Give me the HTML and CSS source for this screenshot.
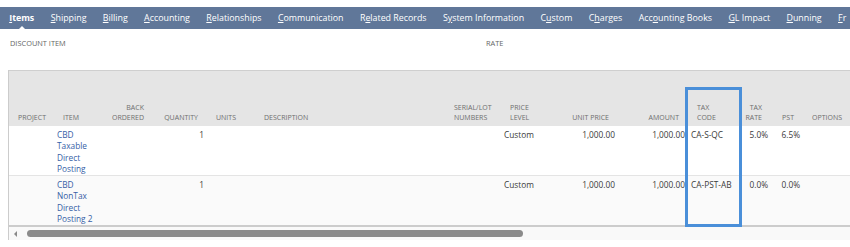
FILE: index.html
```html
<!DOCTYPE html>
<html lang="en">
<head>
<meta charset="utf-8">
<title>Items</title>
<link rel="stylesheet" href="styles.css">
</head>
<body>
<div class="page">
  <nav class="tabs">
    <span class="tab active"><u>I</u>tems</span>
    <span class="tab"><u>S</u>hipping</span>
    <span class="tab"><u>B</u>illing</span>
    <span class="tab"><u>A</u>ccounting</span>
    <span class="tab"><u>R</u>elationships</span>
    <span class="tab"><u>C</u>ommunication</span>
    <span class="tab">R<u>e</u>lated Records</span>
    <span class="tab">S<u>y</u>stem Information</span>
    <span class="tab">C<u>u</u>stom</span>
    <span class="tab">C<u>h</u>arges</span>
    <span class="tab">Acc<u>o</u>unting Books</span>
    <span class="tab"><u>G</u>L Impact</span>
    <span class="tab"><u>D</u>unning</span>
    <span class="tab"><u>F</u>r</span>
  </nav>

  <div class="fields">
    <span class="field-label discount">DISCOUNT ITEM</span>
    <span class="field-label">RATE</span>
  </div>

  <div class="grid-wrap">
    <table class="grid">
      <colgroup>
        <col class="c-project"><col class="c-item"><col class="c-back"><col class="c-qty">
        <col class="c-units"><col class="c-desc"><col class="c-serial"><col class="c-level">
        <col class="c-uprice"><col class="c-amount"><col class="c-taxcode"><col class="c-taxrate">
        <col class="c-pst"><col class="c-options">
      </colgroup>
      <thead>
        <tr>
          <th>PROJECT</th>
          <th>ITEM</th>
          <th class="num">BACK<br>ORDERED</th>
          <th class="num">QUANTITY</th>
          <th>UNITS</th>
          <th>DESCRIPTION</th>
          <th>SERIAL/LOT<br>NUMBERS</th>
          <th>PRICE<br>LEVEL</th>
          <th class="num">UNIT PRICE</th>
          <th class="num">AMOUNT</th>
          <th>TAX<br>CODE</th>
          <th class="num">TAX<br>RATE</th>
          <th class="num">PST</th>
          <th>OPTIONS</th>
        </tr>
      </thead>
      <tbody>
        <tr class="row-odd">
          <td></td>
          <td><a class="link" href="#">CBD Taxable Direct Posting</a></td>
          <td class="num"></td>
          <td class="num">1</td>
          <td></td>
          <td></td>
          <td></td>
          <td>Custom</td>
          <td class="num">1,000.00</td>
          <td class="num">1,000.00</td>
          <td>CA-S-QC</td>
          <td class="num">5.0%</td>
          <td class="num">6.5%</td>
          <td></td>
        </tr>
        <tr class="row-even">
          <td></td>
          <td><a class="link" href="#">CBD NonTax Direct Posting 2</a></td>
          <td class="num"></td>
          <td class="num">1</td>
          <td></td>
          <td></td>
          <td></td>
          <td>Custom</td>
          <td class="num">1,000.00</td>
          <td class="num">1,000.00</td>
          <td>CA-PST-AB</td>
          <td class="num">0.0%</td>
          <td class="num">0.0%</td>
          <td></td>
        </tr>
      </tbody>
    </table>
    <div class="scrollbar">
      <span class="scroll-arrow"></span>
      <span class="scroll-thumb"></span>
    </div>
    <div class="highlight"></div>
  </div>
</div>
</body>
</html>
```
FILE: styles.css
```css
html, body {
  margin: 0;
  padding: 0;
  background: #ffffff;
}

.page {
  width: 850px;
  height: 247px;
  overflow: hidden;
  font-family: "Open Sans", "DejaVu Sans", sans-serif;
  color: #333333;
}

.tabs {
  margin-top: 7px;
  height: 22px;
  background: #607799;
  display: flex;
  align-items: center;
  padding-left: 1px;
  white-space: nowrap;
  overflow: hidden;
}

.tab {
  position: relative;
  flex: none;
  padding: 0 8.2px;
  font-size: 8.85px;
  line-height: 22px;
  color: #ffffff;
}

.tab u {
  text-decoration: underline;
  text-underline-offset: 1px;
}

.tab.active {
  font-weight: 700;
}

.tab.active::after {
  content: "";
  position: absolute;
  left: 50%;
  bottom: 0;
  margin-left: -3px;
  border-left: 3px solid transparent;
  border-right: 3px solid transparent;
  border-bottom: 3px solid #ffffff;
}

.fields {
  display: flex;
  padding: 9px 0 0 10px;
  height: 10px;
  margin-bottom: 22px;
}

.field-label {
  font-size: 7.4px;
  line-height: 10px;
  color: #666666;
}

.discount {
  width: 476px;
}

.grid-wrap {
  position: relative;
  margin-left: 8px;
  width: 842px;
  overflow: hidden;
  border-left: 1px solid #cccccc;
}

.grid {
  table-layout: fixed;
  border-collapse: collapse;
  width: 851px;
}

.c-project { width: 45px; }
.c-item { width: 48px; }
.c-back { width: 51px; }
.c-qty { width: 54px; }
.c-units { width: 48px; }
.c-desc { width: 190px; }
.c-serial { width: 56px; }
.c-level { width: 44px; }
.c-uprice { width: 73px; }
.c-amount { width: 70px; }
.c-taxcode { width: 53px; }
.c-taxrate { width: 30px; }
.c-pst { width: 32px; }
.c-options { width: 57px; }

thead tr {
  background: #e5e5e5;
  border-top: 1px solid #cfcfcf;
}

th {
  height: 52px;
  padding: 0 2px 3px 9px;
  vertical-align: bottom;
  text-align: left;
  font-weight: 400;
  font-size: 7px;
  line-height: 10px;
  color: #6e6e6e;
  white-space: nowrap;
}

th.num {
  text-align: right;
  padding: 0 9px 3px 2px;
}

td {
  padding: 3px 3px 1px 3px;
  vertical-align: top;
  font-size: 8.3px;
  line-height: 11.3px;
  color: #3a3a3a;
  height: 45px;
}

td.num {
  text-align: right;
}

.row-odd {
  background: #ffffff;
}

.row-even {
  background: #fafafa;
  border-top: 1px solid #e4e4e4;
  border-bottom: 2px solid #cccccc;
}

.link {
  color: #3660a6;
  text-decoration: none;
}

.scrollbar {
  display: flex;
  align-items: center;
  height: 13px;
  background: #f9f9f9;
}

.scroll-arrow {
  flex: none;
  margin-left: 5px;
  width: 0;
  height: 0;
  border-top: 3px solid transparent;
  border-bottom: 3px solid transparent;
  border-right: 3px solid #8a8a8a;
}

.scroll-thumb {
  flex: none;
  margin-left: 10px;
  width: 496px;
  height: 7px;
  border-radius: 4px;
  background: #8b8b8b;
}

.highlight {
  position: absolute;
  left: 676px;
  top: 17px;
  width: 51px;
  height: 134px;
  border: 3px solid #4a8fd9;
}
```
